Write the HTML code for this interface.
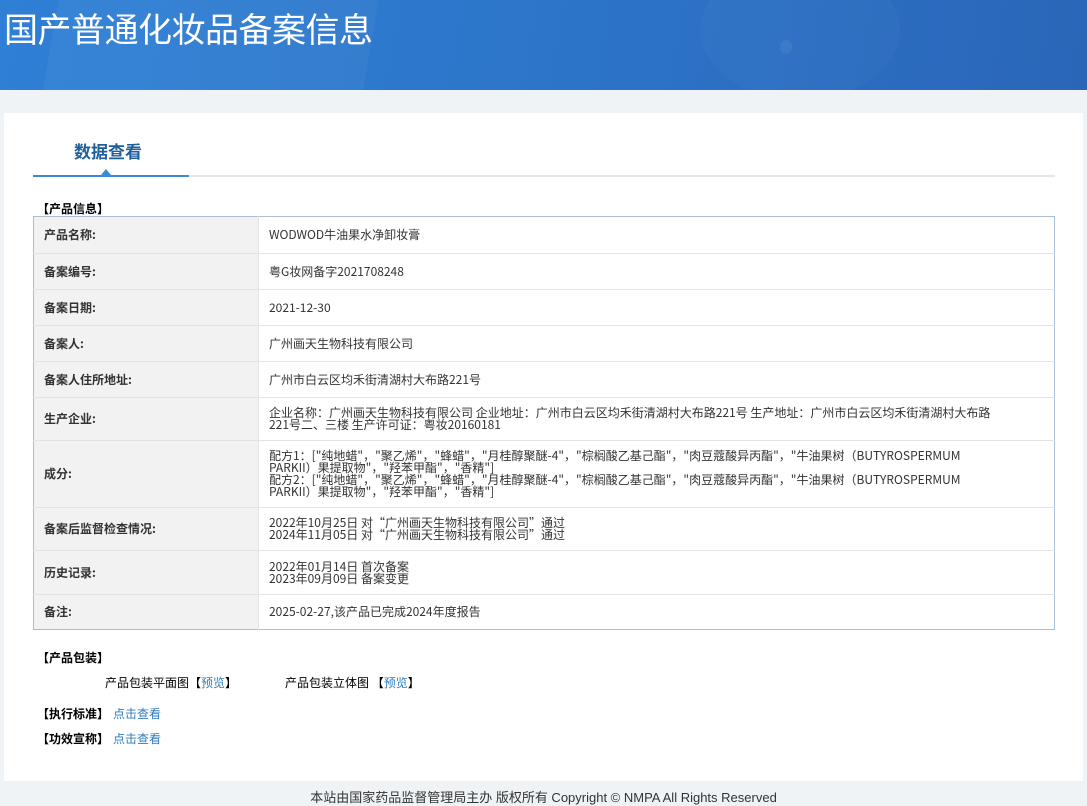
<!DOCTYPE html>
<html><head><meta charset="utf-8"><style>
*{margin:0;padding:0;box-sizing:border-box}
body{width:1087px;height:806px;background:#eff3f6;font-family:"Liberation Sans","Microsoft YaHei","Noto Sans CJK SC",sans-serif;color:#333;position:relative;overflow:hidden;font-size:12px}
.hd{position:absolute;left:0;top:0;width:1087px;height:90px;background:linear-gradient(100deg,#2f7fd6 0%,#2d78cc 40%,#2c6fc3 70%,#2a66b8 100%);overflow:hidden}
.hd h1{position:absolute;left:4px;top:3px;font-size:34px;font-weight:normal;color:#fff;letter-spacing:-0.5px;font-family:"Noto Sans CJK SC",sans-serif}
.panel{position:absolute;left:4px;top:113px;width:1079px;height:668px;background:#fff}
.tab{position:absolute;left:74px;top:138px;font-size:17px;font-weight:bold;color:#1f5e9c;font-family:"Noto Sans CJK SC",sans-serif}
.ln{position:absolute;left:33px;top:175px;width:1022px;height:2px;background:#e6e6e6}
.lnb{position:absolute;left:33px;top:175px;width:156px;height:2px;background:#3a8ad6}
.tri{position:absolute;left:101px;top:169px;width:0;height:0;border-left:5px solid transparent;border-right:5px solid transparent;border-bottom:6px solid #3a8ad6}
.sec{position:absolute;font-size:12px;font-weight:bold;color:#000;font-family:"Noto Sans CJK SC",sans-serif}
table{position:absolute;left:33px;top:216px;width:1022px;border-collapse:collapse;border:1px solid #a9bfd6}
td{border-bottom:1px solid #e3e3e3;font-size:12px;line-height:12px;padding:0 10px;font-family:"Noto Sans CJK SC",sans-serif;color:#333}
td.l{width:225px;background:#f2f2f2;font-weight:bold;color:#333;border-right:1px solid #e3e3e3}
a{color:#2f7dbd;text-decoration:none}
.t{position:absolute;font-family:"Noto Sans CJK SC",sans-serif;font-size:12px;color:#000}
.ft{position:absolute;left:0;width:1087px;top:787px;text-align:center;font-size:13px;color:#333}
</style></head><body>
<div class="hd">
<div style="position:absolute;left:50px;top:-80px;width:320px;height:260px;background:rgba(255,255,255,0.04);transform:skewX(-10deg)"></div>
<div style="position:absolute;left:700px;top:-40px;width:200px;height:140px;border-radius:50%;background:rgba(255,255,255,0.025)"></div>
<div style="position:absolute;left:780px;top:40px;width:12px;height:14px;border-radius:50%;background:rgba(255,255,255,0.06)"></div>
<h1>国产普通化妆品备案信息</h1></div>
<div class="panel"></div>
<div class="tab">数据查看</div>
<div class="ln"></div><div class="lnb"></div><div class="tri"></div>
<div class="sec" style="left:37px;top:200px">【产品信息】</div>
<table>
<tr style="height:37px"><td class="l">产品名称:</td><td>WODWOD牛油果水净卸妆膏</td></tr>
<tr style="height:36px"><td class="l">备案编号:</td><td>粤G妆网备字2021708248</td></tr>
<tr style="height:36px"><td class="l">备案日期:</td><td>2021-12-30</td></tr>
<tr style="height:36px"><td class="l">备案人:</td><td>广州画天生物科技有限公司</td></tr>
<tr style="height:36px"><td class="l">备案人住所地址:</td><td>广州市白云区均禾街清湖村大布路221号</td></tr>
<tr style="height:43px"><td class="l">生产企业:</td><td>企业名称：广州画天生物科技有限公司 企业地址：广州市白云区均禾街清湖村大布路221号 生产地址：广州市白云区均禾街清湖村大布路<br>221号二、三楼 生产许可证：粤妆20160181</td></tr>
<tr style="height:67px"><td class="l">成分:</td><td>配方1：["纯地蜡"，"聚乙烯"，"蜂蜡"，"月桂醇聚醚-4"，"棕榈酸乙基己酯"，"肉豆蔻酸异丙酯"，"牛油果树（BUTYROSPERMUM<br>PARKII）果提取物"，"羟苯甲酯"，"香精"]<br>配方2：["纯地蜡"，"聚乙烯"，"蜂蜡"，"月桂醇聚醚-4"，"棕榈酸乙基己酯"，"肉豆蔻酸异丙酯"，"牛油果树（BUTYROSPERMUM<br>PARKII）果提取物"，"羟苯甲酯"，"香精"]</td></tr>
<tr style="height:43px"><td class="l">备案后监督检查情况:</td><td>2022年10月25日 对“广州画天生物科技有限公司”通过<br>2024年11月05日 对“广州画天生物科技有限公司”通过</td></tr>
<tr style="height:44px"><td class="l">历史记录:</td><td>2022年01月14日 首次备案<br>2023年09月09日 备案变更</td></tr>
<tr style="height:35px"><td class="l" style="border-bottom:none">备注:</td><td style="border-bottom:none">2025-02-27,该产品已完成2024年度报告</td></tr>
</table>
<div class="sec" style="left:37px;top:649px">【产品包装】</div>
<div class="t" style="left:105px;top:674px">产品包装平面图【<a>预览</a>】</div>
<div class="t" style="left:285px;top:674px">产品包装立体图 【<a>预览</a>】</div>
<div class="sec" style="left:37px;top:705px">【执行标准】<a style="font-weight:normal;margin-left:4px">点击查看</a></div>
<div class="sec" style="left:37px;top:730px">【功效宣称】<a style="font-weight:normal;margin-left:4px">点击查看</a></div>
<div class="ft">本站由国家药品监督管理局主办 版权所有 Copyright © NMPA All Rights Reserved</div>
</body></html>
